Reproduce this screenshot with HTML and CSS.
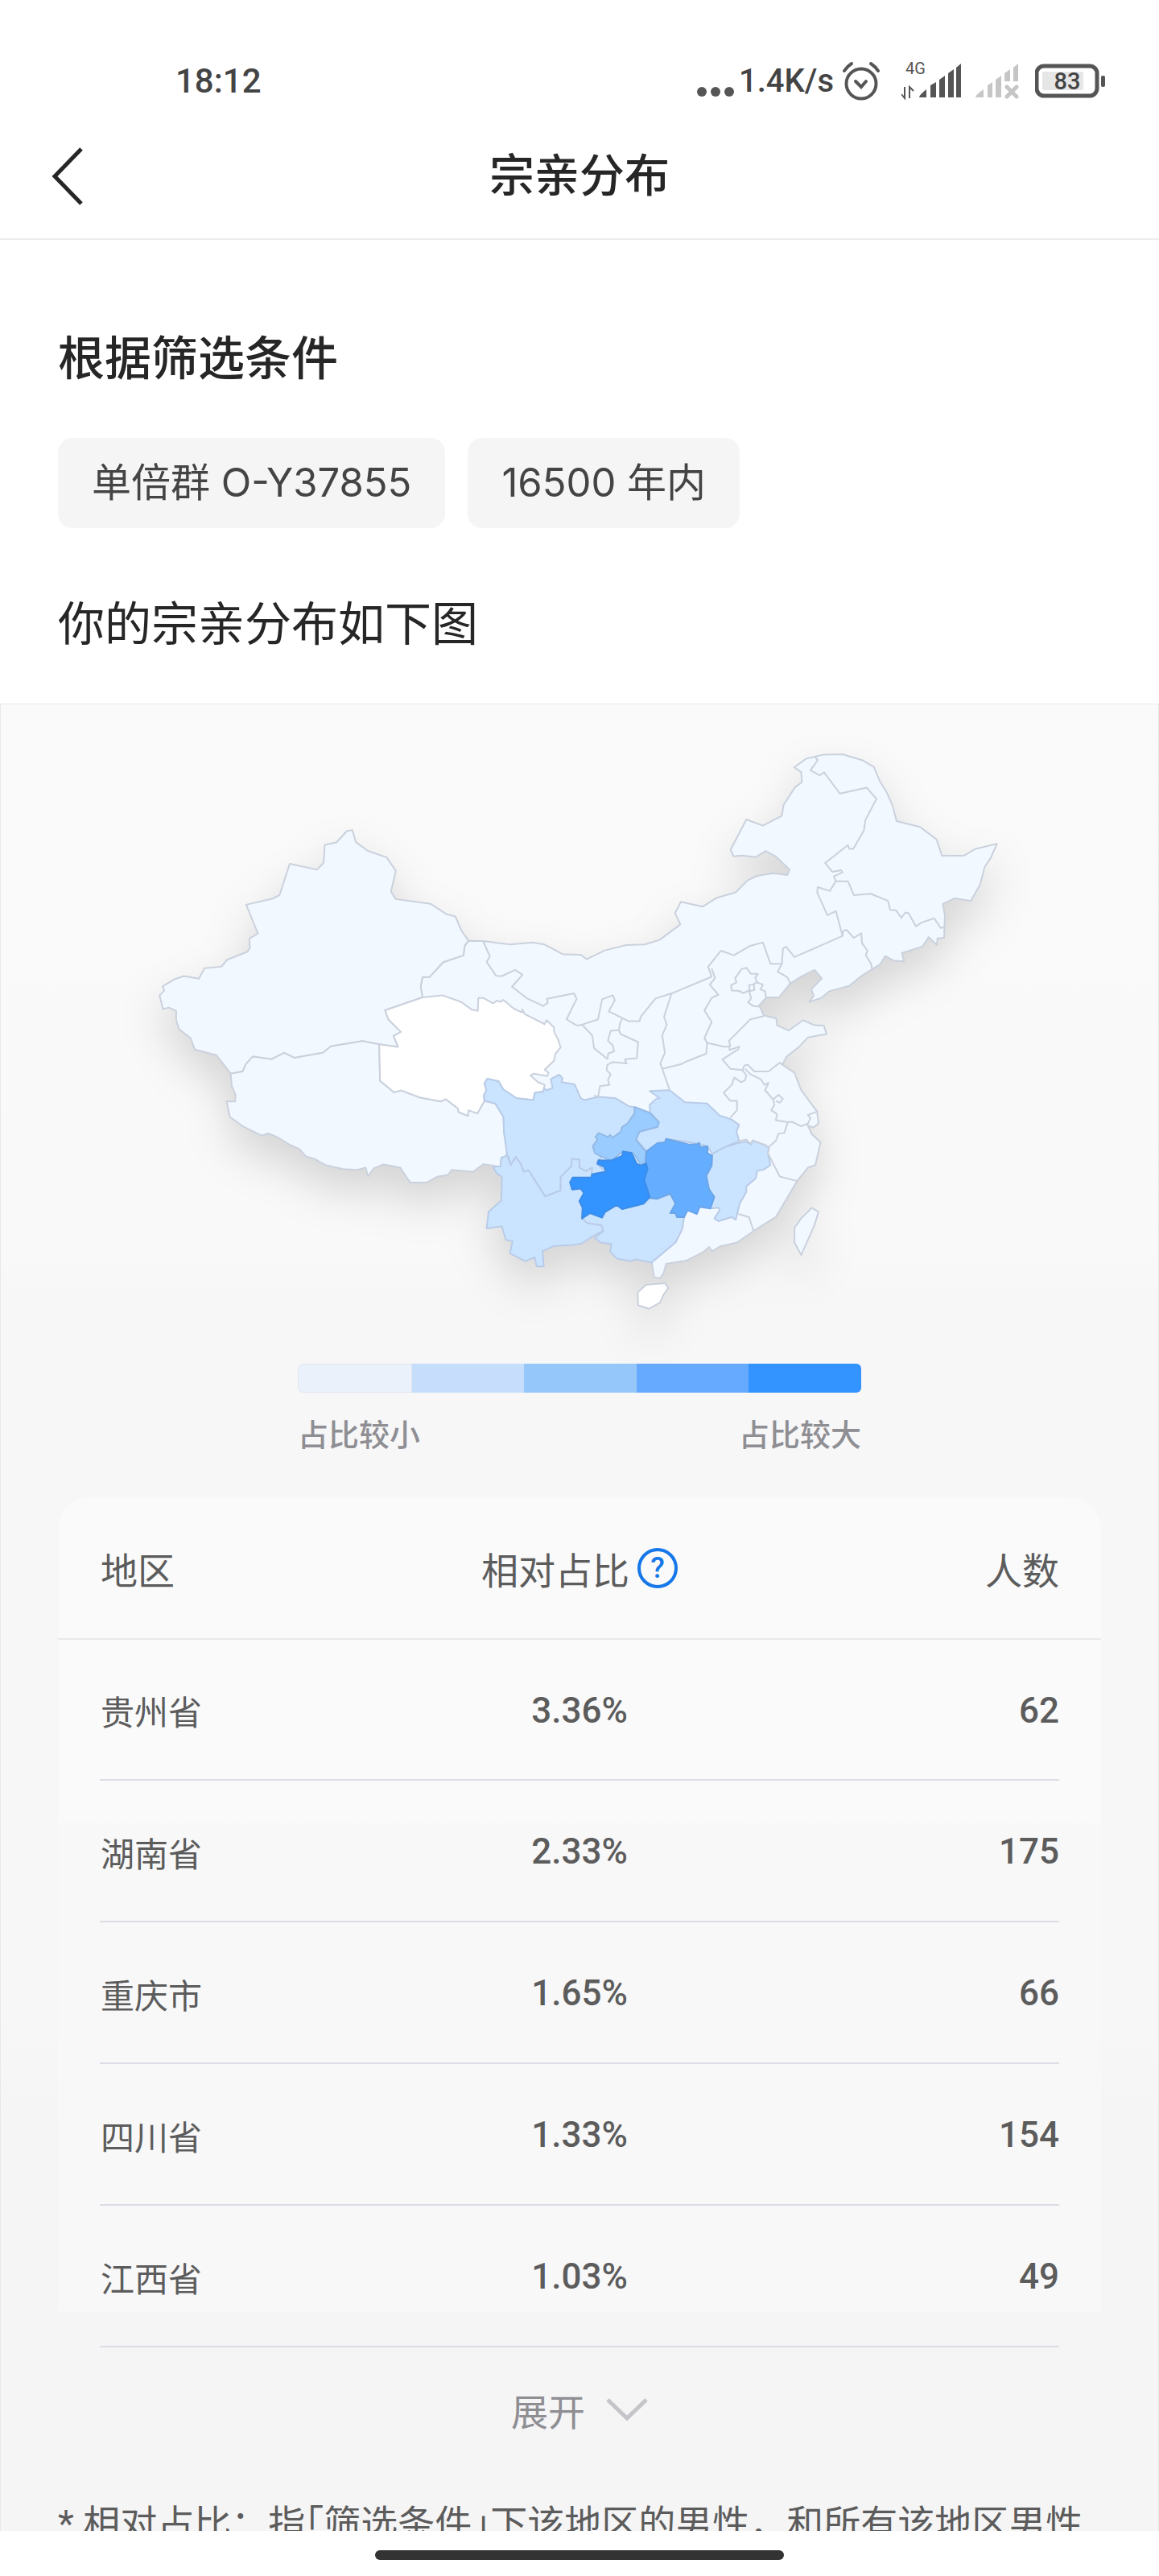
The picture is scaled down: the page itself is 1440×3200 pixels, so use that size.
FILE: index.html
```
<!DOCTYPE html>
<html lang="zh-CN">
<head>
  <meta charset="UTF-8">
  <meta name="viewport" content="width=device-width, initial-scale=1.0">
  <title>宗亲分布</title>
  <link rel="stylesheet" href="styles.css">
</head>
<body>

  <!-- Status bar -->
  <div class="status">
    <span class="time">18:12</span>
    <div class="status-right">
      <svg class="dots" width="48" height="48" viewBox="0 0 48 48" fill="#555"><circle cx="8" cy="37" r="6"/><circle cx="25" cy="37" r="6"/><circle cx="42" cy="37" r="6"/></svg>
      <span class="speed">1.4K/s</span>
      <svg class="alarm" width="48" height="52" viewBox="0 0 48 52" fill="none" stroke="#555" stroke-width="4" stroke-linecap="round"><circle cx="24" cy="29" r="18.500"/><path d="M17 26l7 7 6-7M3 13q4-6 9-9M36 4q6 4 9 9"/></svg>
      <svg class="signal" width="76" height="52" viewBox="0 0 76 52" fill="#555">
        <text x="5" y="17" class="net">4G</text>
        <path d="M22 46q0-3 9-10v10zM36 46V31l7-4v19zM47 46V24l7-5v27zM58 46V16l7-5v35zM68 46V9l6-5v42z"/>
        <path d="M4 33v14l-4-5M10 47V33l5 5" fill="none" stroke="#555" stroke-width="2"/>
      </svg>
      <svg class="signal-off" width="54" height="52" viewBox="0 0 54 52" fill="#c6c6c6">
        <path d="M0 46q0-3 10-10v10zM15 46V31l6-4v19zM25 46V24l7-5v27zM36 26V16l7-5v15zM47 26V9l6-5v22z"/>
        <path d="M39 33l12 12M51 33L39 45" stroke="#c6c6c6" stroke-width="5" stroke-linecap="round"/>
      </svg>
      <svg class="battery" width="88" height="44" viewBox="0 0 88 44">
        <rect x="2" y="3" width="75" height="37" rx="9" fill="none" stroke="#555" stroke-width="5"/>
        <rect x="9" y="10" width="51" height="23" rx="2" fill="#e6e6e6"/>
        <rect x="82" y="15" width="5" height="14" rx="2" fill="#555"/>
        <text x="40" y="32" class="charge">83</text>
      </svg>
    </div>
  </div>

  <!-- Title bar -->
  <header class="topbar">
    <button class="back" aria-label="返回">
      <svg width="40" height="72" viewBox="0 0 40 72" fill="none" stroke="#262626" stroke-width="5"><path d="M37 2L4 36l33 34"/></svg>
    </button>
    <h1>宗亲分布</h1>
  </header>

  <main class="content">
    <section class="filters">
      <h2>根据筛选条件</h2>
      <div class="chips">
        <span class="chip">单倍群 O-Y37855</span>
        <span class="chip">16500 年内</span>
      </div>
      <p class="lead">你的宗亲分布如下图</p>
    </section>

    <section class="result">
      <svg class="map" viewBox="-1200 -540 3240 2190" role="img" aria-label="宗亲分布地图">
        <g class="land">
          <!-- north, east and south-east -->
          <path class="lv1" d="M5 206L60 207 160 220 245 212 290 220 360 257 425 258 447 275 515 242 595 222 665 220 720 203 798 145 778 102 800 60 882 78 935 45 1005 25 1050-20 1085-37 1145-47 1198-40 1207-60 1155-110 1117-130 1080-107 1030-113 997-110 986-135 1045-248 1107-225 1178-262 1184-302 1227-368 1253-388 1250-425 1224-443 1268-475 1330-490 1405-492 1478-470 1522-445 1545-390 1570-350 1592-300 1607-242 1695-220 1757-173 1777-112 1858-112 1900-137 1983-157 1960-105 1937-70 1920-5 1885 57 1825 47 1780 68 1788 110 1785 195 1760 197 1758 222 1727 192 1705 227 1627 252 1635 283 1595 280 1565 263 1545 295 1515 313 1475 338 1430 375 1355 395 1325 420 1280 435 1297 412 1288 387 1327 347 1300 315 1250 340 1208 367 1168 417 1120 418 1093 448 1110 485 1157 497 1160 522 1203 542 1257 503 1300 522 1335 523 1345 555 1275 568 1240 605 1195 640 1180 670 1225 700 1250 765 1310 845 1315 890 1295 905 1275 897 1290 930 1323 960 1303 1045 1275 1055 1235 1105 1155 1240 1072 1292 1010 1335 945 1350 918 1368 905 1352 885 1370 820 1403 745 1415 735 1450 722 1470 700 1465 692 1415 683 1170 150 1010 65 805 0 500-167 418-174 377-167 342-141 342-90 286-14 261-9 224z"/>
          <!-- Xinjiang -->
          <path class="lv1" d="M-1140 377L-1095 350-1060 338-1004 348-983 309-920 303-898 277-822 247-813 232-815 198-783 179-827 71-730 49-702 35-664-82-562-60-537-86-533-153-489-162-450-205-429-208-417-164-373-131-301-106-267-56-285 22-267 50-136 68-78 106-44 115-22 167 5 206-9 224-14 261-90 286-141 342-167 342-174 377-167 418-307 466-295 500-248 547-275 562-259 603-329 593-392 581-510 601-540 625-646 644-685 625-732 649-802 639-829 669-840 695-885 703-938 634-1019 613-1035 570-1078 537-1089 503-1089 468-1117 456-1138 462-1151 410-1133 392z"/>
          <!-- Tibet -->
          <path class="lv1" d="M-885 703L-840 695-829 669-802 639-732 649-685 625-646 644-540 625-510 601-392 581-329 593-326 730-273 773-246 766-178 792-99 807-80 799-35 833-32 847 3 861 5 840 38 852 65 805 105 815 136 865 138 925 150 985 147 1010 128 1018 125 1062 100 1047 60 1042 22 1071-58 1063-71 1082-112 1089-152 1111-213 1111-250 1055-312 1043-348 1057-371 1087-380 1055-410 1063-465 1060-528 1046-570 1023-605 1012-627 986-664 969-708 942-744 927-769 935-840 900-888 865-900 807-868 807-867 781-881 750z"/>
          <!-- Qinghai -->
          <path class="lv0" d="M-329 593L-326 730-273 773-246 766-178 792-99 807-80 799-35 833-32 847 3 861 5 840 38 852 65 805 62 785 72 765 65 740 75 722 118 732 135 762 185 795 248 802 253 775 285 770 290 745 265 735 237 710 250 703 300 712 305 700 290 688 325 655 330 630 350 605 340 575 325 545 325 530 297 503 290 518 215 480 207 463 205 474 175 460 135 427 125 435 112 430 97 440 60 420 42 420 40 468 18 464-22 435-92 410-167 418-307 466-295 500-248 547-275 562-259 603z"/>
          <!-- Sichuan -->
          <path class="lv2" d="M75 722L118 732 135 762 185 795 248 802 253 775 285 770 288 758 297 765 320 757 313 723 345 707 357 720 353 735 402 743 425 795 440 802 490 790 555 795 605 825 627 828 627 850 600 890 580 903 575 920 545 943 470 975 505 1015 487 1030 490 1045 520 1070 465 1078 467 1055 445 1068 420 1055 420 1025 392 1022 390 1050 350 1090 350 1140 292 1163 230 1065 212 1070 200 1040 182 1015 163 1045 155 1015 150 1010 138 925 136 865 105 815 65 805 62 785 72 765 65 740z"/>
          <!-- Yunnan -->
          <path class="lv2" d="M150 1010L128 1018 125 1050 97 1052 110 1075 130 1090 128 1178 80 1220 73 1282 130 1275 145 1325 170 1330 160 1375 217 1405 253 1390 260 1425 287 1425 282 1367 325 1348 395 1345 430 1338 470 1312 510 1290 503 1270 450 1262 428 1243 432 1205 420 1180 437 1150 425 1133 393 1137 385 1110 395 1092 465 1092 467 1055 445 1068 420 1055 420 1025 392 1022 390 1050 350 1090 350 1140 292 1163 230 1065 212 1070 200 1040 182 1015 163 1045z"/>
          <!-- Guangxi -->
          <path class="lv2" d="M683 1170L710 1172 760 1152 780 1190 760 1225 780 1225 785 1240 812 1240 805 1285 780 1335 690 1410 630 1398 615 1405 560 1395 535 1370 540 1340 500 1335 478 1318 510 1292 503 1270 450 1262 430 1245 460 1225 505 1242 515 1222 560 1195 580 1210 660 1190z"/>
          <!-- Hubei -->
          <path class="lv2" d="M683 768L758 765 815 810 898 815 945 860 990 875 1018 895 1008 920 1018 955 960 980 918 1003 898 975 868 965 745 947 740 960 672 993 632 950 645 920 712 903 718 885 685 850 683 820 708 797 720 795z"/>
          <!-- Jiangxi -->
          <path class="lv2" d="M918 1003L960 980 1018 962 1045 958 1062 968 1070 955 1115 970 1130 982 1125 1000 1135 1045 1110 1062 1085 1068 1080 1095 1045 1125 1045 1145 1020 1190 1005 1250 990 1240 940 1255 925 1245 945 1215 942 1205 910 1208 925 1165 905 1135 895 1085 915 1048z"/>
          <!-- Chongqing -->
          <path class="lv3" d="M627 828L685 850 718 885 712 903 645 920 632 950 668 995 668 1035 650 1045 635 1020 620 1000 585 993 540 1028 505 1015 478 1000 470 975 488 950 480 940 492 925 527 940 535 932 545 943 575 920 580 903 600 890 627 850z"/>
          <!-- Hunan -->
          <path class="lv4" d="M672 993L712 963 740 960 745 947 830 968 862 967 868 962 872 977 900 975 900 1000 917 1010 915 1048 895 1085 905 1135 925 1165 910 1208 870 1202 860 1228 825 1215 812 1240 785 1240 780 1225 760 1225 780 1190 760 1152 710 1172 683 1168 663 1100 675 1060 668 1030z"/>
          <!-- Guizhou -->
          <path class="lv5" d="M385 1110L395 1092 465 1092 467 1080 520 1070 512 1052 487 1040 492 1027 540 1028 580 1010 583 995 615 1000 635 1040 650 1047 670 1040 675 1060 663 1100 683 1165 660 1190 580 1210 560 1195 515 1222 505 1242 460 1225 430 1245 432 1205 420 1180 437 1150 425 1133 393 1137z"/>
          <!-- Taiwan, Hainan -->
          <path class="lv1" d="M1290 1205L1315 1220 1300 1270 1250 1382 1225 1335 1225 1280 1250 1245z"/>
          <path class="lv0" d="M638 1522L670 1493 740 1487 753 1505 735 1530 722 1560 680 1583 640 1570z"/>
        </g>
        <!-- inner borders -->
        <g class="border">
          <path d="M60 207L85 265 73 285 108 337 130 338 180 315 207 333 168 378 225 422 285 450 302 437 298 423 400 403 410 423 372 500 410 523 430 520 490 500 505 425 545 410 553 428 530 470 605 507 645 507 650 490 705 422 765 403 900 347 915 340 902 303 950 243 998 260 1060 225 1107 212 1135 292 1178 292 1182 235 1193 228 1225 267 1405 188 1380 95 1348 110 1310 25 1312 5 1357 20 1380-17 1372-35 1405-50 1400-58 1367-52 1340-85 1425-152 1430-138 1445-138 1485-207 1490-245 1532-325 1495-367 1395-345 1335-425 1320-413 1285-432 1312-470 1302-482"/>
          <path d="M1380-17H1425L1447 35 1510 30 1575 57 1583 90 1605 92 1625 120 1640 100 1652 103 1680 152 1700 138 1748 122 1772 158 1787 155"/>
          <path d="M1405 188L1407 170 1420 165 1447 195 1475 178 1478 215 1498 243 1492 260 1513 295 1515 313"/>
          <path d="M1178 292L1162 322 1198 342 1210 367"/>
          <path d="M915 310L928 345 908 370 940 408 915 420 888 467 915 510 888 570 898 588 895 628 820 658 800 668 730 685"/>
          <path d="M898 588L965 603 985 600 980 580 1060 500 1110 488M982 600V615L1018 602 1015 612 955 650 985 685 1030 690 1038 672 1050 670 1075 695 1128 695 1170 662 1180 670"/>
          <path d="M1045 307L1062 330 1088 330 1078 345 1085 360 1070 370 1055 372 1058 390 1035 402 1015 393 990 392 988 372 1008 362 1003 345 1027 312z"/>
          <path d="M1085 362L1107 370 1098 388 1115 395 1118 418M1093 452L1070 450 1052 437 1063 420 1055 395 1075 390 1073 370"/>
          <path d="M765 403L737 490 747 520 730 560 740 625 723 665 730 685 758 765"/>
          <path d="M430 520L468 560 475 608 525 648 528 628 550 620 545 598 527 580 537 543 568 540 572 515 580 498"/>
          <path d="M568 540L575 555 640 585 635 645 590 650 597 665 545 660 525 670 522 690 537 705 527 728 533 745 497 750 490 790 475 785"/>
          <path d="M1030 690L1045 710 1040 728 1025 735 1000 718 990 745 960 775 985 805 1010 805 1010 840 985 868"/>
          <path d="M1040 685L1060 705 1100 725 1112 745 1128 738 1115 765 1145 800 1150 820 1138 840 1160 855 1155 877 1200 885 1187 925 1165 928 1155 955 1128 978 1070 952 1060 965 1045 950 1018 955"/>
          <path d="M1145 800L1165 782 1182 797 1170 812 1155 805M1200 885L1215 883 1250 900 1275 890 1285 870 1275 858 1310 845M1275 897L1272 890"/>
          <path d="M1130 982L1125 1000 1170 1088 1235 1105M1015 1228L1055 1240 1072 1292"/>
        </g>
      </svg>

      <div class="legend">
        <div class="scale"><i></i><i></i><i></i><i></i><i></i></div>
        <div class="scale-text"><span>占比较小</span><span>占比较大</span></div>
      </div>

      <div class="card">
        <table>
          <thead>
            <tr>
              <th scope="col">地区</th>
              <th scope="col">
                <div class="ratio">相对占比
                  <button class="help" aria-label="说明">?</button>
                </div>
              </th>
              <th scope="col">人数</th>
            </tr>
          </thead>
          <tbody>
            <tr><td>贵州省</td><td>3.36%</td><td>62</td></tr>
            <tr><td>湖南省</td><td>2.33%</td><td>175</td></tr>
            <tr><td>重庆市</td><td>1.65%</td><td>66</td></tr>
            <tr><td>四川省</td><td>1.33%</td><td>154</td></tr>
            <tr><td>江西省</td><td>1.03%</td><td>49</td></tr>
          </tbody>
        </table>
        <button class="more">展开
          <svg width="52" height="32" viewBox="0 0 52 32" fill="none" stroke="#c4c4c9" stroke-width="5"><path d="M2 4l24 23L50 4"/></svg>
        </button>
      </div>

      <p class="note">* 相对占比：指<span class="half">「</span>筛选条件<span class="half">」</span>下该地区的男性，和所有该地区男性</p>
    </section>
  </main>

  <div class="homebar"><span></span></div>

</body>
</html>
```
FILE: styles.css
```
* {
  box-sizing: border-box;
}

body {
  margin: 0;
  height: 100vh;
  display: flex;
  flex-direction: column;
  background: #fff;
  color: #262626;
  font-family: Roboto, "Noto Sans CJK SC", sans-serif;
}

h1, h2, p {
  margin: 0;
}

button {
  padding: 0;
  border: 0;
  background: none;
  font-family: inherit;
  cursor: pointer;
}

svg {
  display: block;
  flex: none;
}

/* status bar */
.status {
  flex: none;
  display: flex;
  justify-content: space-between;
  align-items: center;
  height: 142px;
  padding: 60px 66px 0 218px;
  color: #444;
  font-size: 42px;
  font-weight: 500;
  line-height: 48px;
}

.status-right {
  display: flex;
  align-items: center;
}

.speed {
  margin: 0 10px 0 6px;
  font-size: 40px;
}

.signal {
  margin-left: 26px;
}

.signal-off {
  margin: 0 20px 0 16px;
}

.net {
  font-size: 20px;
  font-weight: 400;
}

.charge {
  font-size: 29px;
  text-anchor: middle;
  fill: #444;
}

/* title bar */
.topbar {
  flex: none;
  display: grid;
  grid-template-columns: 1fr auto 1fr;
  align-items: center;
  height: 156px;
  padding: 0 64px;
  border-bottom: 2px solid #ececec;
}

.topbar h1 {
  font-size: 56px;
  font-weight: 500;
  line-height: 80px;
}

.content {
  flex: 1;
  min-height: 0;
  overflow: hidden;
}

/* filters */
.filters {
  padding: 108px 72px 58px;
}

.filters h2,
.lead {
  font-size: 58px;
  line-height: 80px;
}

.filters h2 {
  font-weight: 500;
}

.chips {
  display: flex;
  gap: 28px;
  margin: 58px 0 80px;
}

.chip {
  padding: 0 42px;
  border-radius: 18px;
  background: #f5f5f5;
  color: #444;
  font-family: Inter, "Noto Sans CJK SC", sans-serif;
  font-size: 49px;
  line-height: 112px;
}

/* result */
.result {
  padding: 46px 71px 0;
  border: 1px solid #e9e9eb;
  background: linear-gradient(#fafafa, #f9f9fa 680px, #f7f7f8 740px, #f7f7f8 1640px, #f5f5f6 1760px);
}

.map {
  width: 83%;
  margin: 0 auto;
  overflow: visible;
  stroke: #cad1dc;
  stroke-width: 6;
  stroke-linejoin: round;
}

.land {
  filter: drop-shadow(0 80px 80px rgba(0, 0, 0, 0.14));
}

.border {
  fill: none;
}

.lv0 { fill: #fff; }
.lv1 { fill: #f1f8ff; }
.lv2 { fill: #cae4ff; stroke: #b9cbe6; }
.lv3 { fill: #9accff; stroke: #93b9e6; }
.lv4 { fill: #65aeff; stroke: #6ba5e8; }
.lv5 { fill: #3394ff; stroke: #3c8de8; }

.legend {
  width: 54%;
  margin: 46px auto 0;
}

.scale {
  display: flex;
  height: 36px;
  border-radius: 6px;
  overflow: hidden;
}

.scale i {
  flex: 1;
}

.scale i:nth-child(1) {
  background: #eaf1fb;
  border: 1px solid #e0e6ee;
  border-radius: 6px 0 0 6px;
}
.scale i:nth-child(2) { background: #c6defb; }
.scale i:nth-child(3) { background: #95c7fa; }
.scale i:nth-child(4) { background: #65aaff; }
.scale i:nth-child(5) { background: #3394ff; }

.scale-text {
  display: flex;
  justify-content: space-between;
  margin-top: 26px;
  color: #8e8e93;
  font-size: 38px;
  font-weight: 500;
  line-height: 54px;
}

/* table */
.card {
  margin-top: 50px;
  border-radius: 40px;
  background: linear-gradient(#fafafa 400px, #f8f8f9 410px, #f8f8f8 1010px, transparent 1014px);
}

table {
  width: 100%;
  table-layout: fixed;
  border-collapse: collapse;
  color: #5c5c5c;
}

th {
  height: 176px;
  padding: 0;
  border-bottom: 2px solid #e9e9e9;
  font-size: 46px;
  font-weight: 400;
  text-align: center;
}

td {
  height: 176px;
  padding: 0;
  font-size: 44px;
  font-weight: 500;
  text-align: center;
}

tbody tr {
  background: linear-gradient(#dcdce6, #dcdce6) center bottom / calc(100% - 104px) 2px no-repeat;
}

th:first-child,
td:first-child {
  padding-left: 53px;
  text-align: left;
}

td:first-child {
  font-size: 42px;
  font-weight: 400;
}

th:last-child,
td:last-child {
  padding-right: 52px;
  text-align: right;
}

.ratio {
  display: flex;
  justify-content: center;
  align-items: center;
  gap: 10px;
}

.help {
  width: 50px;
  height: 50px;
  border: 4px solid #1677e8;
  border-radius: 50%;
  color: #1677e8;
  font-size: 36px;
  font-weight: 500;
  line-height: 42px;
}

.more {
  display: flex;
  justify-content: center;
  align-items: center;
  gap: 26px;
  width: 100%;
  height: 154px;
  color: #8e8e93;
  font-size: 46px;
}

.note {
  margin-top: 30px;
  color: #5c5c5c;
  font-size: 46px;
  line-height: 70px;
}

.half {
  font-feature-settings: "halt";
}

/* home indicator */
.homebar {
  flex: none;
  display: flex;
  justify-content: center;
  height: 56px;
  padding-top: 24px;
  background: #fff;
}

.homebar span {
  width: 508px;
  height: 12px;
  border-radius: 6px;
  background: #333;
}
```
